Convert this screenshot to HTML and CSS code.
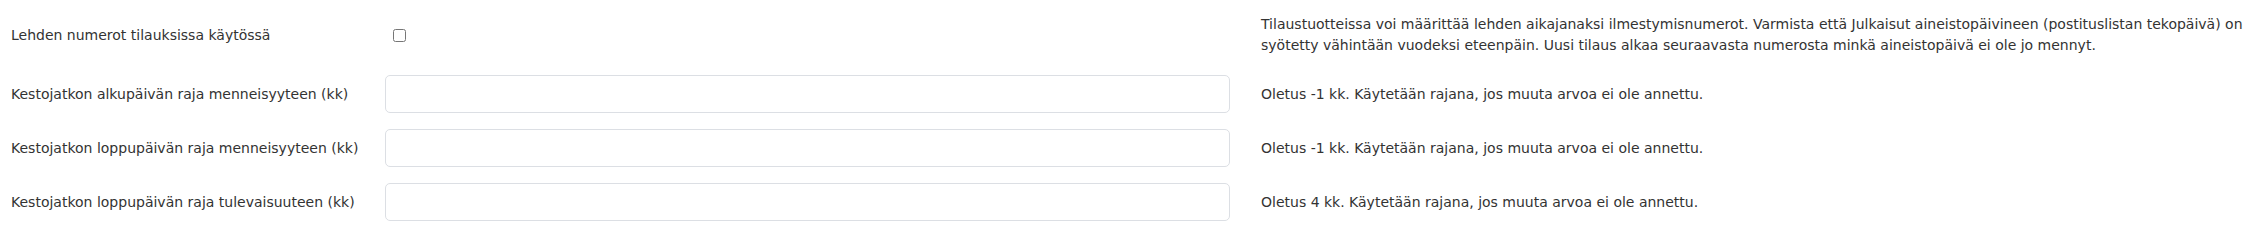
FILE: index.html
```html
<!DOCTYPE html>
<html lang="fi">
<head>
<meta charset="utf-8">
<title>Asetukset</title>
<link rel="stylesheet" href="styles.css">
</head>
<body>
<form class="settings">
  <div class="row row-first">
    <label class="label" for="f1">Lehden numerot tilauksissa käytössä</label>
    <div class="control"><input type="checkbox" id="f1" class="check"></div>
    <div class="help">Tilaustuotteissa voi määrittää lehden aikajanaksi ilmestymisnumerot. Varmista että Julkaisut aineistopäivineen (postituslistan tekopäivä) on syötetty vähintään vuodeksi eteenpäin. Uusi tilaus alkaa seuraavasta numerosta minkä aineistopäivä ei ole jo mennyt.</div>
  </div>
  <div class="row">
    <label class="label" for="f2">Kestojatkon alkupäivän raja menneisyyteen (kk)</label>
    <div class="control"><input type="text" id="f2" class="text-input"></div>
    <div class="help">Oletus -1 kk. Käytetään rajana, jos muuta arvoa ei ole annettu.</div>
  </div>
  <div class="row">
    <label class="label" for="f3">Kestojatkon loppupäivän raja menneisyyteen (kk)</label>
    <div class="control"><input type="text" id="f3" class="text-input"></div>
    <div class="help">Oletus -1 kk. Käytetään rajana, jos muuta arvoa ei ole annettu.</div>
  </div>
  <div class="row">
    <label class="label" for="f4">Kestojatkon loppupäivän raja tulevaisuuteen (kk)</label>
    <div class="control"><input type="text" id="f4" class="text-input"></div>
    <div class="help">Oletus 4 kk. Käytetään rajana, jos muuta arvoa ei ole annettu.</div>
  </div>
</form>
</body>
</html>
```

FILE: styles.css
```css
html, body {
  margin: 0;
  padding: 0;
  background: #ffffff;
}
body {
  font-family: "DejaVu Sans", "Liberation Sans", sans-serif;
  font-size: 14px;
  line-height: 21px;
  color: #333333;
}
.settings {
  display: flex;
  flex-direction: column;
  gap: 16px;
  padding: 14px 11px 0 11px;
}
.row {
  display: grid;
  grid-template-columns: 374px 845px 1fr;
  align-items: center;
}
.row-first {
  margin-bottom: 3px;
}
.label {
  display: block;
}
.control {
  display: flex;
  align-items: center;
}
.check {
  width: 13px;
  height: 13px;
  margin: 0 0 0 8px;
}
.text-input {
  box-sizing: border-box;
  width: 100%;
  height: 38px;
  margin: 0;
  border: 1px solid #dcdfe4;
  border-radius: 5px;
  background: #ffffff;
  padding: 6px 12px;
  font: inherit;
}
.help {
  padding-left: 31px;
}
```
